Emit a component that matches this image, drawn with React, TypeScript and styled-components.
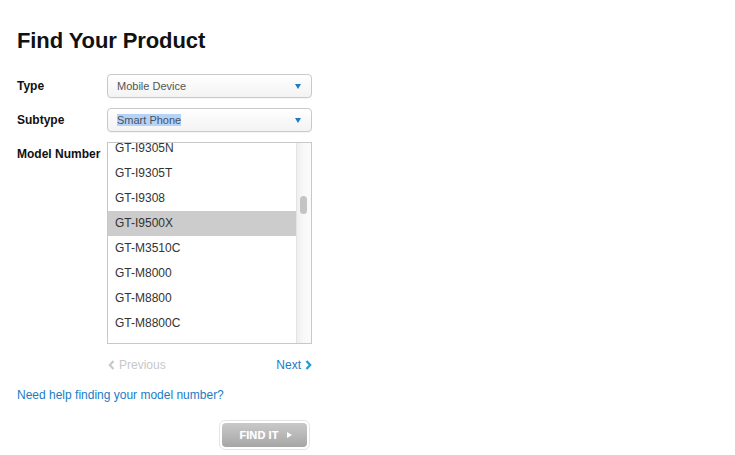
import React, { useLayoutEffect, useRef } from "react";
import styled, { createGlobalStyle } from "styled-components";

const GlobalStyle = createGlobalStyle`
  html, body {
    margin: 0;
    padding: 0;
    background: #ffffff;
  }
  body {
    font-family: "Liberation Sans", Arial, Helvetica, sans-serif;
    color: #222;
  }
`;

const Page = styled.main`
  width: 735px;
  height: 455px;
  box-sizing: border-box;
  padding: 28px 0 0 17px;
  overflow: hidden;
`;

const Title = styled.h1`
  margin: 0 0 20px;
  font-size: 22px;
  line-height: 26px;
  font-weight: 700;
  color: #111;
  letter-spacing: -0.1px;
`;

const Form = styled.form`
  display: flex;
  flex-direction: column;
  width: 295px;
`;

const Row = styled.div<{ $top?: boolean; $gap?: number }>`
  display: grid;
  grid-template-columns: 90px 205px;
  align-items: ${(p) => (p.$top ? "start" : "center")};
  margin-top: ${(p) => p.$gap ?? 0}px;
`;

const Label = styled.label<{ $pad?: number }>`
  font-size: 12px;
  line-height: 14px;
  font-weight: 700;
  color: #111;
  padding-top: ${(p) => p.$pad ?? 0}px;
`;

const SelectBox = styled.div`
  position: relative;
  box-sizing: border-box;
  height: 24px;
  border: 1px solid #c9c9c9;
  border-radius: 4px;
  background: linear-gradient(#ffffff, #f3f3f3);
  box-shadow: 0 1px 1px rgba(0, 0, 0, 0.04);
  display: flex;
  align-items: center;
  padding: 0 0 0 9px;
  font-size: 11px;
  color: #555;
`;

const SelectedText = styled.span`
  background: #b4d3f7;
  color: #4a5260;
`;

const Caret = styled.span`
  position: absolute;
  right: 10px;
  top: 9px;
  width: 0;
  height: 0;
  border-left: 3.5px solid transparent;
  border-right: 3.5px solid transparent;
  border-top: 5px solid #1c7cc4;
`;

/* list box: a clipped viewport of rows beside a scroll track */
const ListFrame = styled.div`
  display: flex;
  box-sizing: border-box;
  height: 202px;
  border: 1px solid #c8c8c8;
  background: #fff;
`;

const ListViewport = styled.ul`
  flex: 1;
  margin: 0;
  padding: 0;
  list-style: none;
  height: 200px;
  overflow: hidden;
`;

const ScrollTrack = styled.div`
  position: relative;
  box-sizing: border-box;
  width: 15px;
  height: 200px;
  border-left: 1px solid #e3e3e3;
  background: linear-gradient(to right, #efefef, #f8f8f8 45%, #fbfbfb);
`;

const ScrollThumb = styled.div`
  position: absolute;
  left: 3px;
  width: 7px;
  border-radius: 4px;
  background: #c4c4c4;
`;

const Item = styled.li<{ $active?: boolean }>`
  height: 25px;
  line-height: 25px;
  padding-left: 7px;
  font-size: 12px;
  color: #333;
  background: ${(p) => (p.$active ? "#cccccc" : "transparent")};
  white-space: nowrap;
`;

const Pager = styled.div`
  grid-column: 2;
  display: flex;
  justify-content: space-between;
  align-items: center;
  padding: 0 0 0 1px;
  font-size: 12px;
  line-height: 14px;
`;

const PageLink = styled.a<{ $disabled?: boolean }>`
  display: inline-flex;
  align-items: center;
  gap: 4px;
  color: ${(p) => (p.$disabled ? "#c8c8c8" : "#1a7cc3")};
  text-decoration: none;
  cursor: ${(p) => (p.$disabled ? "default" : "pointer")};
`;

const HelpLink = styled.a`
  margin-top: 16px;
  font-size: 12px;
  line-height: 14px;
  color: #1a7cc3;
  text-decoration: none;
`;

const ButtonRow = styled.div`
  display: flex;
  justify-content: flex-end;
  margin-top: 18px;
  padding-right: 2px;
`;

const ButtonRing = styled.div`
  box-sizing: border-box;
  width: 91px;
  height: 30px;
  padding: 2px;
  border: 1px solid #e4e4e4;
  border-radius: 6px;
  background: #fff;
`;

const FindButton = styled.button`
  width: 100%;
  height: 100%;
  border: 0;
  border-radius: 4px;
  background: linear-gradient(#c9c9c9, #a6a6a6);
  color: #fff;
  font-family: "Liberation Sans", Arial, Helvetica, sans-serif;
  font-size: 11px;
  font-weight: 700;
  letter-spacing: 0.1px;
  display: flex;
  align-items: center;
  justify-content: center;
  gap: 8px;
  padding: 0 0 0 2px;
  text-shadow: 0 0 1px rgba(255, 255, 255, 0.4);
`;

const Play = styled.span`
  width: 0;
  height: 0;
  border-top: 3.5px solid transparent;
  border-bottom: 3.5px solid transparent;
  border-left: 5px solid #fff;
`;

const Chevron = ({ dir, color }: { dir: "left" | "right"; color: string }) => (
  <svg width="7" height="10" viewBox="0 0 7 10" aria-hidden="true">
    <path
      d={dir === "left" ? "M5.5 1 L1.8 5 L5.5 9" : "M1.5 1 L5.2 5 L1.5 9"}
      fill="none"
      stroke={color}
      strokeWidth="2.2"
    />
  </svg>
);

const models = [
  "GT-I5500", "GT-I5510", "GT-I5700", "GT-I5800", "GT-I5801", "GT-I8000",
  "GT-I8150", "GT-I8160", "GT-I8190", "GT-I8260", "GT-I8262", "GT-I8530",
  "GT-I8552", "GT-I8580", "GT-I8730", "GT-I8910", "GT-I9000", "GT-I9001",
  "GT-I9070", "GT-I9100", "GT-I9195", "GT-I9300", "GT-I9301I", "GT-I9305",
  "GT-I9305N", "GT-I9305T", "GT-I9308", "GT-I9500X", "GT-M3510C", "GT-M8000",
  "GT-M8800", "GT-M8800C", "GT-M8910", "GT-N5100", "GT-N5110", "GT-N7000",
  "GT-N7100", "GT-N7105", "GT-N8000", "GT-N8010", "GT-P1000", "GT-P3100",
  "GT-P3110", "GT-P5100", "GT-P5110", "GT-P6200", "GT-P6800", "GT-P7500",
  "GT-S3350", "GT-S3650", "GT-S3850", "GT-S5230", "GT-S5250", "GT-S5260",
  "GT-S5280", "GT-S5300", "GT-S5310", "GT-S5330", "GT-S5360", "GT-S5570",
  "GT-S5620", "GT-S5660", "GT-S5830", "GT-S6102", "GT-S6310", "GT-S6500",
  "GT-S6810", "GT-S7230E", "GT-S7262", "GT-S7390", "GT-S7500", "GT-S7562",
  "GT-S7580", "GT-S8000", "GT-S8300", "GT-S8500", "GT-S8530", "SGH-E250",
  "SGH-F480", "SGH-G600", "SGH-i900", "SGH-J700", "SGH-L760", "SGH-U600",
  "SGH-U900", "SGH-X480", "SGH-Z400", "SPH-M900", "SPH-M910",
];

const SELECTED = "GT-I9500X";
const ROW_H = 25;
const VIEW_H = 200;
const CONTENT_H = models.length * ROW_H;
const SCROLL_TOP = models.indexOf("GT-I9305N") * ROW_H + 7;
const THUMB_H = Math.max(18, Math.round((VIEW_H * VIEW_H) / CONTENT_H));
const THUMB_TOP = Math.round(
  (SCROLL_TOP / (CONTENT_H - VIEW_H)) * (VIEW_H - THUMB_H) - 2
);

export default function App() {
  const listRef = useRef<HTMLUListElement>(null);

  useLayoutEffect(() => {
    if (listRef.current) listRef.current.scrollTop = SCROLL_TOP;
  }, []);

  return (
    <>
      <GlobalStyle />
      <Page>
        <Title>Find Your Product</Title>
        <Form onSubmit={(e) => e.preventDefault()}>
          <Row>
            <Label>Type</Label>
            <SelectBox>
              Mobile Device
              <Caret />
            </SelectBox>
          </Row>
          <Row $gap={10}>
            <Label>Subtype</Label>
            <SelectBox>
              <SelectedText>Smart Phone</SelectedText>
              <Caret />
            </SelectBox>
          </Row>
          <Row $gap={10} $top>
            <Label $pad={5}>Model Number</Label>
            <ListFrame>
              <ListViewport ref={listRef}>
                {models.map((m) => (
                  <Item key={m} $active={m === SELECTED}>
                    {m}
                  </Item>
                ))}
              </ListViewport>
              <ScrollTrack>
                <ScrollThumb style={{ top: THUMB_TOP, height: THUMB_H }} />
              </ScrollTrack>
            </ListFrame>
          </Row>
          <Row $gap={14}>
            <Pager>
              <PageLink $disabled>
                <Chevron dir="left" color="#c8c8c8" />
                Previous
              </PageLink>
              <PageLink>
                Next
                <Chevron dir="right" color="#1a9be0" />
              </PageLink>
            </Pager>
          </Row>
          <HelpLink>Need help finding your model number?</HelpLink>
          <ButtonRow>
            <ButtonRing>
              <FindButton type="submit">
                FIND IT
                <Play />
              </FindButton>
            </ButtonRing>
          </ButtonRow>
        </Form>
      </Page>
    </>
  );
}
